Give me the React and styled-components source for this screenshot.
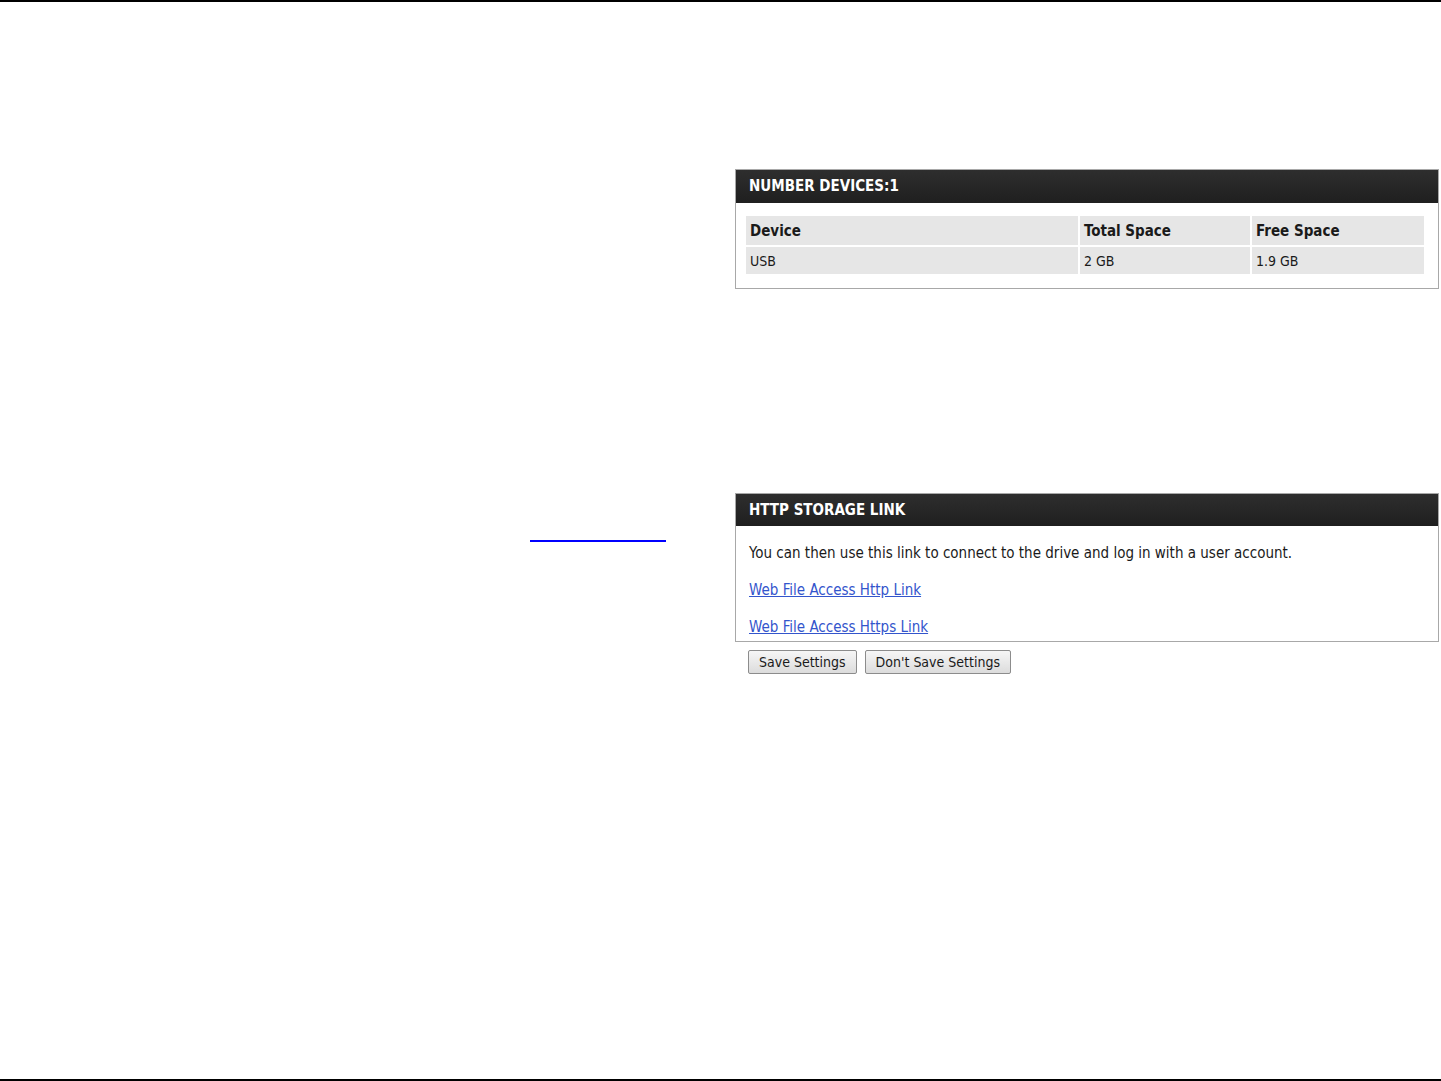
import React from 'react';
import styled, { createGlobalStyle } from 'styled-components';

const GlobalStyle = createGlobalStyle`
  html, body {
    margin: 0;
    padding: 0;
    background: #fff;
  }
  body {
    font-family: "DejaVu Sans Condensed", "Liberation Sans", Arial, sans-serif;
    color: #1a1a1a;
  }
`;

const devices = [
  { name: 'USB', total: '2 GB', free: '1.9 GB' }
];

const Page = styled.div`
  box-sizing: border-box;
  height: 1081px;
  border-top: 2px solid #000;
  border-bottom: 2px solid #000;
  display: grid;
  grid-template-columns: 735px 704px;
`;

const LeftColumn = styled.div`
  padding: 538px 0 0 530px;
`;

const LinkStub = styled.span`
  display: block;
  width: 136px;
  height: 0;
  border-bottom: 2px solid #0000ff;
`;

const RightColumn = styled.div`
  padding-top: 167px;
  display: flex;
  flex-direction: column;
`;

const Panel = styled.section`
  border: 1px solid #a8a8a8;
  background: #fff;
  margin-bottom: ${p => p.$gap || 0}px;
`;

const PanelHeader = styled.div`
  height: ${p => p.$h || 33}px;
  line-height: ${p => p.$h || 33}px;
  padding-left: 13px;
  background: linear-gradient(#2e2e2e, #1f1f1f);
  color: #fff;
  font-weight: bold;
  font-size: 15px;
`;

const TableWrap = styled.div`
  padding: 11px 12px 12px 8px;
`;

const Table = styled.table`
  width: 100%;
  border-collapse: separate;
  border-spacing: 2px;
  font-size: 15px;
`;

const HeadCell = styled.th`
  background: #e6e6e6;
  text-align: left;
  font-weight: bold;
  height: 29px;
  padding: 0 4px;
  width: ${p => p.$w}px;
`;

const Cell = styled.td`
  background: #e6e6e6;
  height: 27px;
  padding: 0 4px;
  font-size: 14px;
`;

const PanelBody = styled.div`
  padding: 17px 13px 4px;
  font-size: 15px;
  display: flex;
  flex-direction: column;
  gap: 17px;
`;

const Line = styled.p`
  margin: 0;
  line-height: 20px;
`;

const BodyLink = styled.a`
  color: #3355cc;
  text-decoration: underline;
  font-size: 15px;
`;

const ButtonRow = styled.div`
  display: flex;
  gap: 8px;
  padding: 8px 0 0 13px;
`;

const Button = styled.button`
  height: 24px;
  padding: 0 10px;
  border: 1px solid #8c8c8c;
  border-radius: 2px;
  background: linear-gradient(#f6f6f6, #dcdcdc);
  font-family: "DejaVu Sans Condensed", "Liberation Sans", Arial, sans-serif;
  font-size: 14px;
  color: #1a1a1a;
`;

export default function App() {
  return (
    <>
      <GlobalStyle />
      <Page>
        <LeftColumn>
          <LinkStub />
        </LeftColumn>
        <RightColumn>
          <Panel $gap={204}>
            <PanelHeader>NUMBER DEVICES:1</PanelHeader>
            <TableWrap>
              <Table>
                <thead>
                  <tr>
                    <HeadCell $w={324}>Device</HeadCell>
                    <HeadCell $w={162}>Total Space</HeadCell>
                    <HeadCell>Free Space</HeadCell>
                  </tr>
                </thead>
                <tbody>
                  {devices.map(d => (
                    <tr key={d.name}>
                      <Cell>{d.name}</Cell>
                      <Cell>{d.total}</Cell>
                      <Cell>{d.free}</Cell>
                    </tr>
                  ))}
                </tbody>
              </Table>
            </TableWrap>
          </Panel>
          <Panel>
            <PanelHeader $h={32}>HTTP STORAGE LINK</PanelHeader>
            <PanelBody>
              <Line>You can then use this link to connect to the drive and log in with a user account.</Line>
              <Line><BodyLink href="#">Web File Access Http Link</BodyLink></Line>
              <Line><BodyLink href="#">Web File Access Https Link</BodyLink></Line>
            </PanelBody>
          </Panel>
          <ButtonRow>
            <Button>Save Settings</Button>
            <Button>Don't Save Settings</Button>
          </ButtonRow>
        </RightColumn>
      </Page>
    </>
  );
}
